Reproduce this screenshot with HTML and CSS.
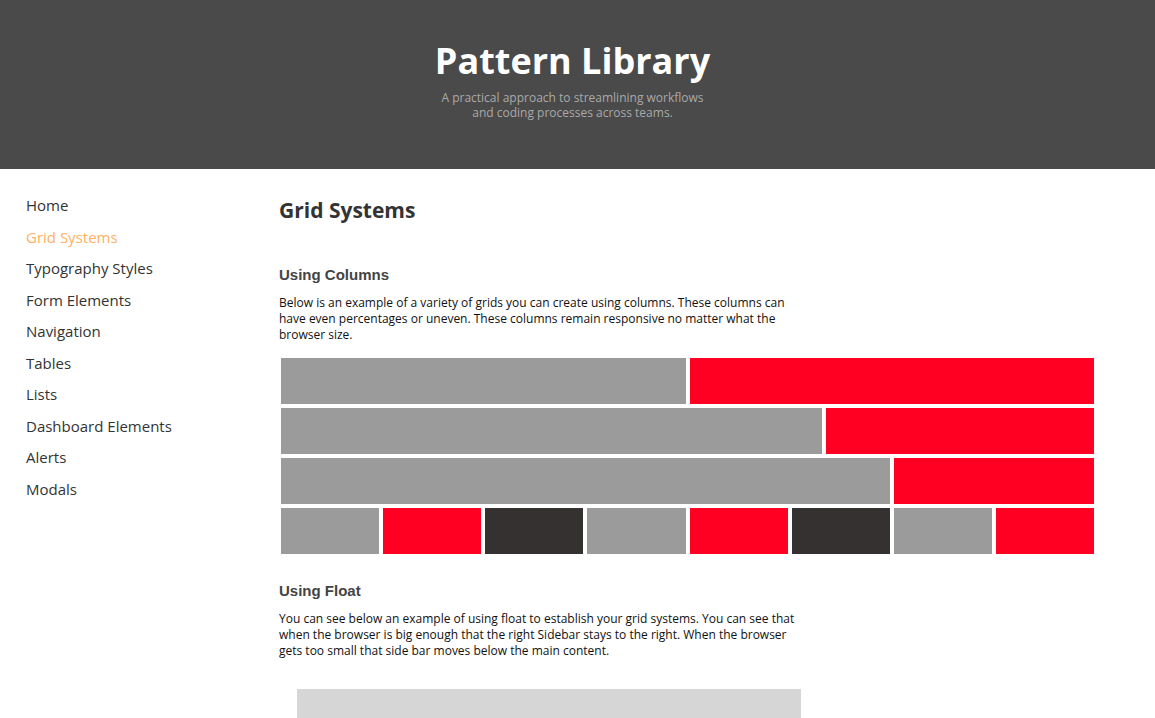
FILE: index.html
```html
<!DOCTYPE html>
<html lang="en">
<head>
<meta charset="utf-8">
<title>Pattern Library</title>
<link rel="stylesheet" href="styles.css">
</head>
<body>
<header class="hero">
  <h1 class="hero-title">Pattern Library</h1>
  <p class="hero-sub">A practical approach to streamlining workflows<br>and coding processes across teams.</p>
</header>
<div class="layout">
  <nav class="sidebar">
    <a class="nav-link" href="#">Home</a>
    <a class="nav-link active" href="#">Grid Systems</a>
    <a class="nav-link" href="#">Typography Styles</a>
    <a class="nav-link" href="#">Form Elements</a>
    <a class="nav-link" href="#">Navigation</a>
    <a class="nav-link" href="#">Tables</a>
    <a class="nav-link" href="#">Lists</a>
    <a class="nav-link" href="#">Dashboard Elements</a>
    <a class="nav-link" href="#">Alerts</a>
    <a class="nav-link" href="#">Modals</a>
  </nav>
  <main class="content">
    <h2 class="page-title">Grid Systems</h2>
    <h3 class="section-title first">Using Columns</h3>
    <p class="section-text">Below is an example of a variety of grids you can create using columns. These columns can have even percentages or uneven. These columns remain responsive no matter what the browser size.</p>
    <div class="grid">
      <div class="row">
        <div class="cell gray w-half"></div>
        <div class="cell red w-half"></div>
      </div>
      <div class="row">
        <div class="cell gray w-two-thirds"></div>
        <div class="cell red w-third"></div>
      </div>
      <div class="row">
        <div class="cell gray w-three-quarters"></div>
        <div class="cell red w-quarter"></div>
      </div>
      <div class="row">
        <div class="cell gray w-eighth"></div>
        <div class="cell red w-eighth"></div>
        <div class="cell dark w-eighth"></div>
        <div class="cell gray w-eighth"></div>
        <div class="cell red w-eighth"></div>
        <div class="cell dark w-eighth"></div>
        <div class="cell gray w-eighth"></div>
        <div class="cell red w-eighth"></div>
      </div>
    </div>
    <h3 class="section-title">Using Float</h3>
    <p class="section-text">You can see below an example of using float to establish your grid systems. You can see that when the browser is big enough that the right Sidebar stays to the right. When the browser gets too small that side bar moves below the main content.</p>
    <div class="float-demo">
      <div class="float-main"></div>
    </div>
  </main>
</div>
</body>
</html>
```
FILE: styles.css
```css
* { box-sizing: border-box; }
html, body { margin: 0; padding: 0; }
body {
  font-family: "Open Sans", "Liberation Sans", sans-serif;
  color: #333;
  background: #fff;
  overflow: hidden;
}
.hero {
  background: #4a4a4a;
  height: 169px;
  text-align: center;
  padding: 38px 10px 0 0;
}
.hero-title {
  margin: 0;
  font-size: 36px;
  font-weight: 700;
  line-height: 46px;
  color: #fff;
}
.hero-sub {
  margin: 6px 0 0;
  font-size: 12px;
  line-height: 15px;
  color: #a9a9a9;
}
.layout {
  display: flex;
}
.sidebar {
  width: 279px;
  flex: none;
  padding: 21px 0 0 26px;
  display: flex;
  flex-direction: column;
}
.nav-link {
  display: block;
  font-size: 15px;
  line-height: 31.5px;
  color: #333;
  text-decoration: none;
}
.nav-link.active { color: #ffb063; }
.content {
  flex: 1;
  padding-right: 59px;
}
.page-title {
  margin: 27px 0 0;
  font-size: 21px;
  line-height: 28px;
  font-weight: 700;
  color: #333;
}
.section-title {
  margin: 26px 0 0;
  font-family: "Liberation Sans", Arial, sans-serif;
  font-size: 15px;
  line-height: 18px;
  font-weight: 700;
  color: #444;
}
.section-title.first { margin-top: 42px; }
.section-text {
  margin: 11px 0 0;
  width: 525px;
  font-size: 12px;
  line-height: 16px;
  color: #111;
}
.grid {
  margin-top: 13px;
  width: 817px;
}
.row {
  display: flex;
}
.cell {
  height: 46px;
  margin: 2px;
}
.gray { background: #9b9b9b; }
.red { background: #ff0022; }
.dark { background: #353130; }
.w-half { width: calc(50% - 4px); }
.w-two-thirds { width: calc(66.6667% - 4px); }
.w-third { width: calc(33.3333% - 4px); }
.w-three-quarters { width: calc(75% - 4px); }
.w-quarter { width: calc(25% - 4px); }
.w-eighth { width: calc(12.5% - 4px); }
.float-demo {
  margin-top: 30px;
  padding-left: 18px;
}
.float-main {
  width: 504px;
  height: 60px;
  background: #d6d6d6;
}
```
